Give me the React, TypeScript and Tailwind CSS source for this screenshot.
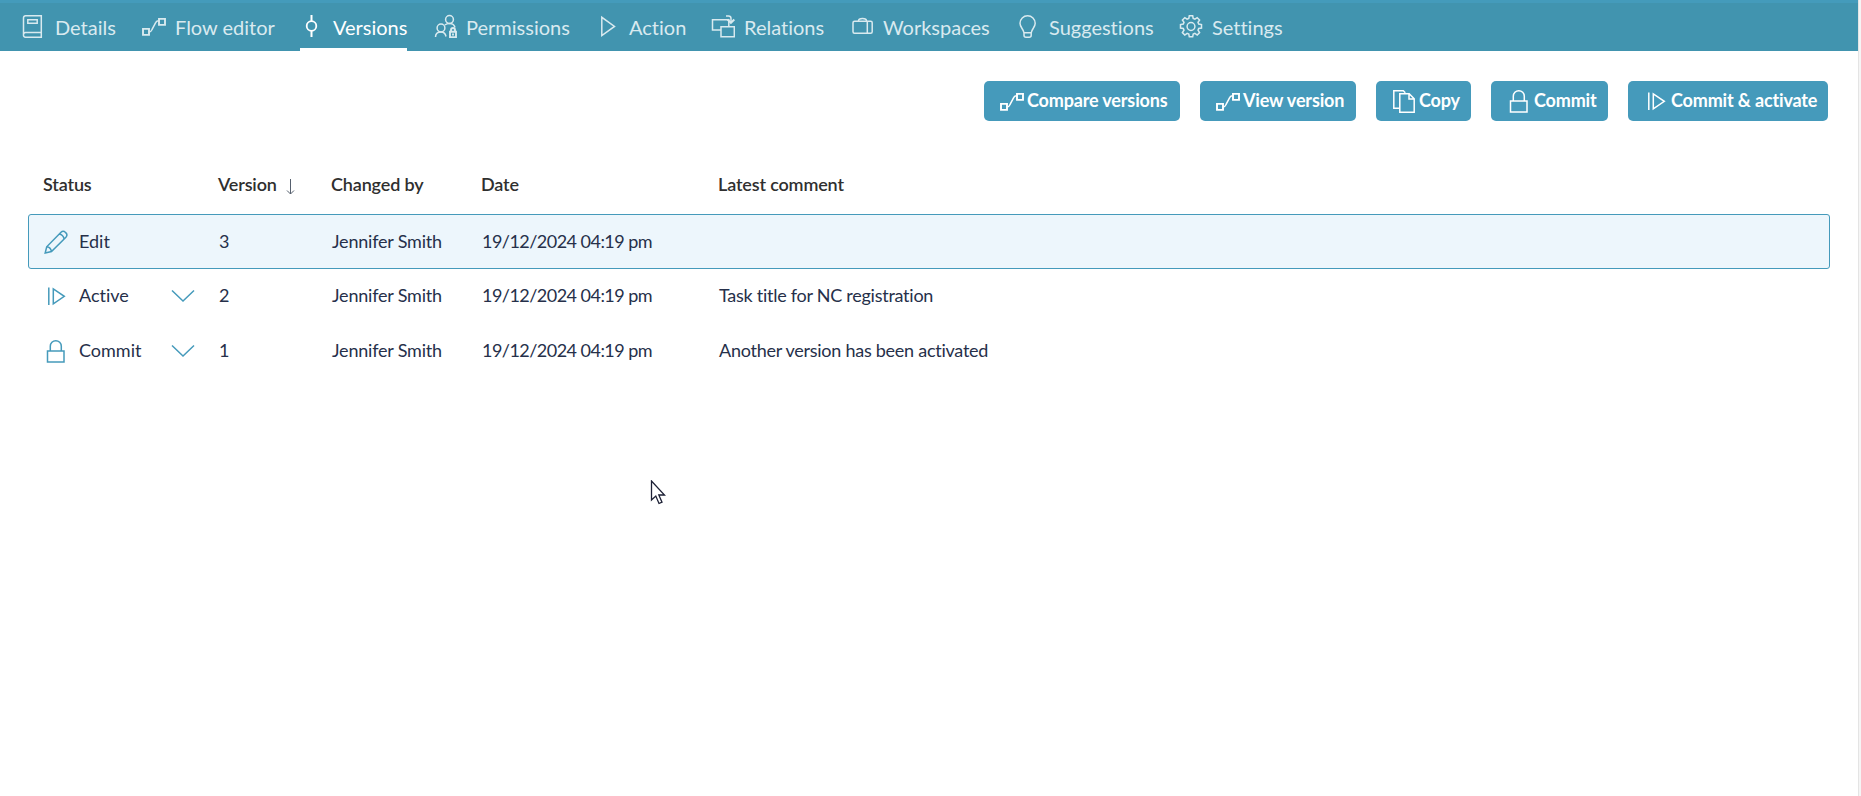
import type { ReactNode } from "react";
import clsx from "clsx";

function Icon({ children, className }: { children: ReactNode; className?: string }) {
  return (
    <svg
      width="24"
      height="24"
      viewBox="0 0 24 24"
      fill="none"
      stroke="currentColor"
      strokeWidth="1.5"
      className={clsx("shrink-0", className)}
    >
      {children}
    </svg>
  );
}

const BookIcon = () => (
  <Icon>
    <path d="M21.3 18.5V1.8H5.5a2 2 0 0 0-2 2v17a2 2 0 0 0 2 2.4h15.8V18.5H5.5a2 2 0 0 0-2 2.2" />
    <path d="M7.8 5.8h9.4v3.4H7.8z" />
  </Icon>
);

const FlowIcon = ({ className }: { className?: string }) => (
  <Icon className={className}>
    <path strokeWidth="1.9" d="M1 14.900h6v6H1zM17 4.900h6v6h-6z" />
    <path d="M7.2 18c1.8 0 2-.8 3-2.800l3.600-6.800c.6-1.200 1.200-1.700 3-1.700" />
  </Icon>
);

const VersionsIcon = () => (
  <Icon>
    <circle cx="11.500" cy="12" r="4.800" strokeWidth="1.8" />
    <path strokeWidth="2" d="M11.500 1v6.400M11.500 16.600V23" />
  </Icon>
);

const PermissionsIcon = () => (
  <Icon>
    <circle cx="15.500" cy="5.500" r="3.900" />
    <circle cx="7" cy="14" r="3.900" />
    <path d="M1.500 23c0-3 2-5 5.500-5s4.500 2 5 4.500M10.800 11c1.200-1 2.800-1.600 4.700-1.600 3 0 5 1.600 5.500 4.100" />
    <path strokeWidth="1.9" d="M16 17.800h6v5.300h-6zM17 17.500V16a2 2 0 0 1 4 0v1.500M19 19.500v2" />
  </Icon>
);

const PlayIcon = () => (
  <Icon>
    <path d="M6.800 3.300v18.200l12.700-9.100z" />
  </Icon>
);

const RelationsIcon = () => (
  <Icon>
    <path d="M9.800 16H1.500V5.800h16.300v6.700M10 12.700h13.300v10H10z" />
    <path d="M15 2h2.500c1.800 0 2.500.8 2.500 2.500v4" />
    <path strokeWidth="2" d="M16.500 5.500l3.400 3.300L23.300 5.500" />
  </Icon>
);

const BriefcaseIcon = () => (
  <Icon>
    <rect x="2" y="7.300" width="19.200" height="12" rx="1.500" />
    <path d="M16.300 7.300v12M7.500 7c0-1.800 1.400-2.500 4-2.500s4 .7 4 2.500" />
  </Icon>
);

const BulbIcon = () => (
  <Icon>
    <path d="M8 18.800h7.200v2.400a2 2 0 0 1-2 2H10a2 2 0 0 1-2-2v-2.400C7.500 15 4 13.500 4 9.300a7.600 7.600 0 0 1 15.200 0c0 4.200-3.500 5.700-4 9.500" />
  </Icon>
);

const GearIcon = () => (
  <Icon>
    <circle cx="12" cy="12.500" r="3.900" />
    <path d="M10.300 1.800h3.400l.5 2.700 1.700.7 2.300-1.600 2.400 2.400L19 8.300l.7 1.700 2.800.6V14l-2.800.5-.7 1.700 1.600 2.400-2.400 2.400-2.300-1.600-1.700.7-.5 2.700h-3.400l-.5-2.700-1.700-.7L5.800 21l-2.400-2.400L5 16.200l-.7-1.700-2.800-.5v-3.400l2.800-.6.7-1.700L3.400 6l2.400-2.400 2.300 1.600 1.700-.7z" />
  </Icon>
);

const CopyIcon = () => (
  <Icon>
    <path d="M7.500 19.300H1.800V1.800h9.500l2 2" />
    <path d="M7.800 4.800h9.400l5 5v13.400H7.800zM17 5v5h5" />
  </Icon>
);

const LockIcon = ({ className }: { className?: string }) => (
  <Icon className={className}>
    <path d="M3.500 12h16.500v11h-16.500zM6.300 12V7.200a5.500 5.500 0 0 1 11 0V12" />
  </Icon>
);

const ActivateIcon = ({ className }: { className?: string }) => (
  <Icon className={className}>
    <path d="M4.800 3.500v17.500M9.300 4.800v15l11-7.500z" />
  </Icon>
);

const PencilIcon = () => (
  <Icon>
    <path d="M1.200 23l1.500-6.200L17 2.300c1.300-1.300 3.100-1.300 4.300 0l.6.600c1.200 1.200 1.200 3 0 4.300L7.500 21.500zM2.700 16.800c2.400.2 4.300 2 4.800 4.700M15.200 4.100c2.400.3 4.200 2 4.900 4.900" />
  </Icon>
);

const ChevronIcon = () => (
  <svg width="24" height="14" viewBox="0 0 24 14" fill="none" stroke="currentColor" strokeWidth="1.5">
    <path d="M1 1.500l11 10.500L23 1.500" />
  </svg>
);

const tabs = [
  { label: "Details", icon: <BookIcon />, width: "w-[122px]", gap: "gap-[11px]" },
  { label: "Flow editor", icon: <FlowIcon />, width: "w-[158px]", gap: "gap-[9px]" },
  { label: "Versions", icon: <VersionsIcon />, width: "w-[134px]", gap: "gap-[9px]", active: true },
  { label: "Permissions", icon: <PermissionsIcon />, width: "w-[161px]", gap: "gap-2" },
  { label: "Action", icon: <PlayIcon />, width: "w-[116px]", gap: "gap-[10px]" },
  { label: "Relations", icon: <RelationsIcon />, width: "w-[140px]", gap: "gap-[9px]" },
  { label: "Workspaces", icon: <BriefcaseIcon />, width: "w-[165px]", gap: "gap-2" },
  { label: "Suggestions", icon: <BulbIcon />, width: "w-[163px]", gap: "gap-[9px]" },
  { label: "Settings", icon: <GearIcon />, width: "w-[110px]", gap: "gap-[9px]" },
];

const actions = [
  { label: "Compare versions", icon: <FlowIcon />, width: "w-[196px]" },
  { label: "View version", icon: <FlowIcon />, width: "w-[156px]" },
  { label: "Copy", icon: <CopyIcon />, width: "w-[95px]" },
  { label: "Commit", icon: <LockIcon />, width: "w-[117px]" },
  { label: "Commit & activate", icon: <ActivateIcon />, width: "w-[200px]" },
];

const versions = [
  { status: "Edit", icon: <PencilIcon />, version: 3, comment: "", selected: true },
  { status: "Active", icon: <ActivateIcon />, version: 2, comment: "Task title for NC registration" },
  { status: "Commit", icon: <LockIcon />, version: 1, comment: "Another version has been activated" },
];

const columns = "grid grid-cols-[175px_113px_150px_237px_1fr] items-center";

export default function App() {
  return (
    <div className="flex h-[796px] w-[1861px] overflow-hidden bg-white font-['Lato',sans-serif] [font-variant-ligatures:none]">
      <div className="relative w-[1858px]">
        {/* Tab bar */}
        <nav className="flex h-[51px] border-t-3 border-[#449bbb] bg-[#4194af] pl-5 text-[20px] text-[#d9eaef]">
          {tabs.map((tab) => (
            <div key={tab.label} className={clsx("shrink-0", tab.width)}>
              <a
                className={clsx(
                  "flex h-12 w-fit items-center border-b-3 whitespace-nowrap",
                  tab.gap,
                  tab.active ? "border-white text-white" : "border-transparent"
                )}
              >
                {tab.icon}
                <span className="pt-0.5">{tab.label}</span>
              </a>
            </div>
          ))}
        </nav>

        {/* Toolbar */}
        <div className="mt-[30px] flex justify-end gap-5 pr-[30px]">
          {actions.map((action) => (
            <button
              key={action.label}
              className={clsx(
                "flex h-10 items-center gap-[3px] rounded-[5px] bg-[#459abb] pl-4 text-[18px] font-bold tracking-[-0.15px] whitespace-nowrap text-white",
                action.width
              )}
            >
              {action.icon}
              <span className="pb-0.5">{action.label}</span>
            </button>
          ))}
        </div>

        {/* Versions table */}
        <div className="mt-[43px] ml-7 w-[1802px] text-[18px] text-[#26304a]">
          <div className={clsx(columns, "h-[50px] pb-[9px] pl-[15px] font-semibold tracking-[-0.15px] text-[#2f2f2f]")}>
            <span>Status</span>
            <span className="flex items-center gap-[9px]">
              Version
              <svg width="9" height="17" viewBox="0 0 9 17" fill="none" stroke="#56606e" className="mt-1">
                <path d="M4.500 1v15M1 12.500l3.500 3.500L8 12.500" />
              </svg>
            </span>
            <span>Changed by</span>
            <span>Date</span>
            <span>Latest comment</span>
          </div>
          {versions.map((row) => (
            <div
              key={row.version}
              className={clsx(
                columns,
                "h-[55px] border pl-[15px]",
                row.selected ? "-mb-px rounded-[3px] border-[#459abb] bg-[#edf6fc]" : "border-transparent"
              )}
            >
              <div className="flex items-center text-[#459abb]">
                {row.icon}
                <span className="ml-[11px] w-[92px] text-[#26304a]">{row.status}</span>
                {!row.selected && <ChevronIcon />}
              </div>
              <span>{row.version}</span>
              <span className="tracking-[-0.2px]">Jennifer Smith</span>
              <span className="tracking-[-0.53px]">19/12/2024 04:19 pm</span>
              <span className="tracking-[-0.26px]">{row.comment}</span>
            </div>
          ))}
        </div>

        {/* Mouse pointer */}
        <svg width="16" height="25" viewBox="0 0 16 25" className="absolute top-[480px] left-[650px]" fill="white" stroke="#1c2035" strokeWidth="1.300">
          <path d="M1.500 1v19l4.300-4 3.200 7.500 3-1.300-3.200-7.200h5.700z" />
        </svg>
      </div>
      <div className="w-[3px] border-l border-[#e4e4e4] bg-[#f5f5f5]" />
    </div>
  );
}
